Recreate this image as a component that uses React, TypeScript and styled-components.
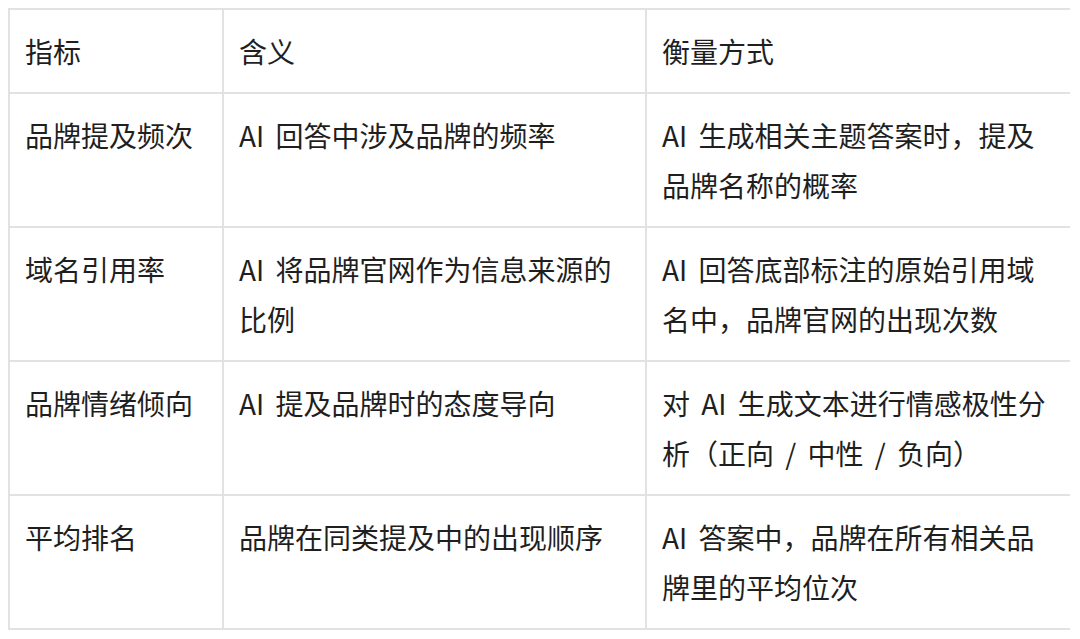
import React from 'react';
import styled, { createGlobalStyle } from 'styled-components';

const GlobalStyle = createGlobalStyle`
    body {
        margin: 8px 10px 8px 8px;
        background: #ffffff;
        font-family: "Noto Sans CJK SC", "Noto Sans", sans-serif;
    }
`;

const headers = ['指标', '含义', '衡量方式'];
const widths = [214, 423, 425];

const rows = [
    ['品牌提及频次', 'AI 回答中涉及品牌的频率', 'AI 生成相关主题答案时，提及品牌名称的概率'],
    ['域名引用率', 'AI 将品牌官网作为信息来源的比例', 'AI 回答底部标注的原始引用域名中，品牌官网的出现次数'],
    ['品牌情绪倾向', 'AI 提及品牌时的态度导向', '对 AI 生成文本进行情感极性分析（正向 / 中性 / 负向）'],
    ['平均排名', '品牌在同类提及中的出现顺序', 'AI 答案中，品牌在所有相关品牌里的平均位次'],
];

const App = () => {
    return (
        <>
            <GlobalStyle />
            <Table>
                <colgroup>
                    {widths.map((w) => (
                        <Col key={w} $w={w} />
                    ))}
                </colgroup>
                <thead>
                    <tr>
                        {headers.map((h) => (
                            <HeadCell key={h}>{h}</HeadCell>
                        ))}
                    </tr>
                </thead>
                <tbody>
                    {rows.map((r) => (
                        <tr key={r[0]}>
                            {r.map((t, i) => (
                                <Cell key={i}>{t}</Cell>
                            ))}
                        </tr>
                    ))}
                </tbody>
            </Table>
        </>
    );
};

export default App;

const Table = styled.table`
    width: 1062px;
    table-layout: fixed;
    border-collapse: collapse;
    color: #1f1f1f;
    font-size: 28px;
    line-height: 50px;
    word-spacing: 5px;
`;

const Col = styled.col<{ $w: number }>`
    width: ${(p) => p.$w}px;
`;

const Cell = styled.td`
    border: 2px solid #e2e2e5;
    padding: 16px 15px;
    text-align: left;
    vertical-align: top;
`;

const HeadCell = styled.th`
    border: 2px solid #e2e2e5;
    padding: 16px 15px;
    text-align: left;
    vertical-align: top;
    font-weight: 400;
`;
